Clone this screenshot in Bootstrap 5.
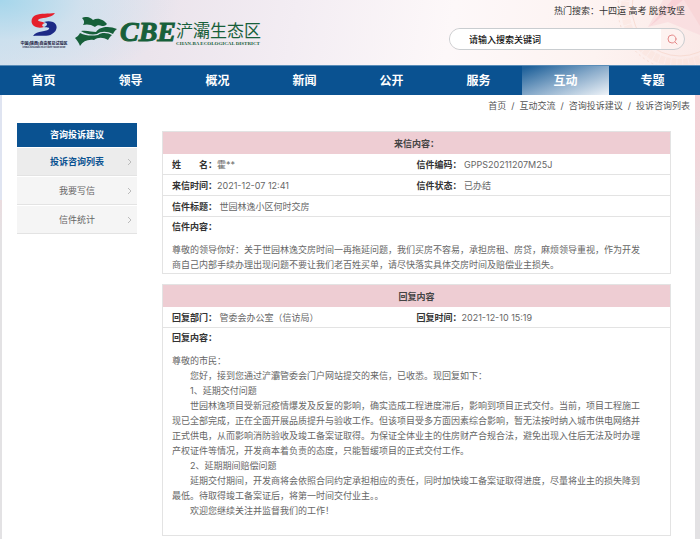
<!DOCTYPE html>
<html lang="zh-CN">
<head>
<meta charset="utf-8">
<meta name="viewport" content="width=device-width, initial-scale=1">
<title>投诉咨询列表 - 浐灞生态区</title>
<link rel="stylesheet" href="https://cdn.jsdelivr.net/npm/bootstrap@5.3.0/dist/css/bootstrap.min.css">
<style>
:root { --brand: #0a5291; --rule: #e3e3e3; }
body {
  font-family: Inter, "Noto Sans CJK SC", sans-serif;
  font-size: 9px; line-height: 15px; color: #666;
  background: #e3e2e4;
}
a { color: inherit; text-decoration: none; }
.backdrop {
  background:
    linear-gradient(90deg, #dfe4f1 0, #dfe4f1 3px, transparent 3px) 0 0 / 100% 200px no-repeat,
    linear-gradient(#f6cdd2, #f3d3d8 150px, #e3e2e4 240px);
}
.site-head {
  height: 65px;
  background:
    radial-gradient(ellipse 180px 90px at 0 0, #a5d6eb, rgba(190,222,238,.5) 45%, transparent),
    linear-gradient(100deg, #d9e2ee 0, #ebe4ec 22%, #f3edf3 42%, #fdf8f9 64%, #fdf3f1 85%, #fbe9e7 100%);
}
.emblem { width: 180px; height: 65px; top: 0; right: 0; z-index: 0; }
.site-head > .head-row { z-index: 1; }
.brand { padding: 13px 0 0 22px; }
.ftz { width: 44px; color: #16163a; }
.ftz-cn { font-size: 4px; line-height: 5px; font-weight: 700; }
.ftz-en { font-size: 2px; line-height: 3px; font-weight: 700; }
.brand-green { color: #17603a; }
.cbe { font: italic 700 28px/30px "Liberation Serif", serif; -webkit-text-stroke: 1px #17603a; }
.cbe-cn { font-size: 17px; line-height: 20px; }
.cbe-en { font: 700 5px/6px "Liberation Serif", serif; }
.head-tools { width: 236px; margin-right: 15px; padding-top: 3px; color: #333; }
.search-pill { height: 22px; margin-top: 10px; border: 1px solid #c9cdd0; overflow: hidden; background: #fdf2f0; }
.search-pill input { font-size: 9px; line-height: 15px; font-weight: 500; padding-left: 19px; min-width: 0; color: #222; outline: 0; }
.search-pill input::placeholder { color: #111; opacity: 1; }
.search-pill button { width: 23px; color: #e58b8b; }
.main-nav { background: var(--brand); border-top: 1px solid #5a8db8; padding-right: 4px; }
.main-nav a { flex: 1 1 0; color: #fff; font-size: 12px; font-weight: 700; line-height: 29px; text-align: center; }
.main-nav a.active { background: linear-gradient(160deg, #1f619a 5%, #86a9c9 50%, #eef3f8 100%); }
.sheet { background: #fff; margin: 0 5px 0 2px; padding-bottom: 16px; }
.crumbs { padding: 3px 5px 0 0; line-height: 15px; color: #555; }
.crumbs .breadcrumb-item { padding: 0; }
.crumbs .breadcrumb-item + .breadcrumb-item::before { color: #555; padding: 0 5px; }
.cols { padding: 10px 24px 0 15px; gap: 25px; }
.side { width: 120px; flex: none; }
.side h2 { background: var(--brand); color: #fff; font-size: 9px; font-weight: 700; line-height: 24px; margin: 0 0 1px; }
.side a { background: #f5f5f5; border-bottom: 1px solid var(--rule); line-height: 27px; margin-top: 1px; position: relative; }
.side a.active { background: #ececec; color: var(--brand); font-weight: 700; }
.side svg { position: absolute; right: 5px; top: 10px; }
.letters { padding-top: 8px; min-width: 0; }
.letter { width: 100%; table-layout: fixed; border: 1px solid var(--rule); margin-bottom: 10px; }
.letter th, .letter td { border: 0 solid var(--rule); border-bottom-width: 1px; padding: 3px 9px 2px; font-weight: 400; }
.letter td + td { padding-left: 0; }
.letter .caption-cell { background: #eecdd3; color: #444; font-weight: 700; text-align: center; padding: 4px 0 3px; border-bottom: 0; }
.letter b { color: #333; font-weight: 700; }
.letter .prose { padding: 2px 25px 1px 9px; border-bottom: 0; }
.prose p { margin: 0; }
.prose b + p { margin-top: 8px; }
.prose .indent { text-indent: 2em; }
.letter.reply .prose { padding-bottom: 17px; }
</style>
<script src="https://cdn.jsdelivr.net/npm/bootstrap@5.3.0/dist/js/bootstrap.bundle.min.js"></script>
</head>
<body>
<div class="backdrop">
<header class="site-head position-relative overflow-hidden">
  <svg class="emblem position-absolute" viewBox="0 0 180 65" aria-hidden="true">
    <g fill="none" stroke="#f8d9cf" stroke-width="1" opacity=".8">
      <circle cx="160" cy="8" r="62" stroke-dasharray="2 3"/>
      <circle cx="160" cy="8" r="48"/>
      <circle cx="160" cy="8" r="55" stroke-width="8" stroke-dasharray="5 1" opacity=".35"/>
    </g>
    <path d="M143 0 L128 27 L148 22 L180 35 V0Z" fill="#f9dcdf" opacity=".8"/>
    <path d="M152 0 L130 26 L163 0Z" fill="#f6cbd2" opacity=".7"/>
    <path d="M164 0 L180 26 V0Z" fill="#f8d3d6" opacity=".8"/>
  </svg>
  <div class="head-row position-relative d-flex justify-content-between">
    <a href="#" class="brand d-flex align-items-start">
      <span class="ftz d-flex flex-column align-items-center text-nowrap">
        <svg width="26" height="24" viewBox="0 0 26 24" aria-hidden="true">
          <path d="M24 0 C17 1 10 0 5 2 C0 4 -1 10 3 13 C6 15 10 15 13 14 C10 13 11 11 14 10 C11 8 7 9 7 7 C9 4 20 6 24 0Z" fill="#e5202c"/>
          <path d="M2 23 C9 22 17 24 21 21 C27 18 27 11 22 9 C19 8 16 8 13 9 C17 10 17 12 13 14 C16 15 19 14 18 16 C16 19 6 17 2 23Z" fill="#1c2a86"/>
        </svg>
        <span class="ftz-cn mt-1">中国(陕西)自由贸易试验区</span>
        <span class="ftz-en">CHINA (SHAANXI) PILOT FREE TRADE ZONE</span>
      </span>
      <svg class="ms-2 mt-1" width="46" height="30" viewBox="0 0 46 30" fill="#17603a" aria-hidden="true">
        <path d="M8 1 C12 -1 16 0 19 3 C24 0 30 3 33 7 C31 9 30 9 28 9 C25 8 23 8 21 10 C17 7 12 7 9 8 C11 5 10 3 8 1Z"/>
        <path d="M7 14 C13 13 18 15 22 15 C26 9 36 9 43 12 C41 13 40 15 39 17 C33 14 27 14 23 17 C18 18 11 17 7 14Z"/>
        <path d="M6 16 C12 19 18 19 24 18 C28 15 34 16 38 18 C36 20 35 21 34 23 C29 20 24 20 20 23 C14 22 9 24 6 29 C5 26 3 23 1 21 C3 20 5 18 6 16Z"/>
      </svg>
      <span class="brand-green d-flex align-items-start">
        <span class="cbe mt-1">CBE</span>
        <span class="d-flex flex-column text-nowrap mt-2"><span class="cbe-cn">浐灞生态区</span><span class="cbe-en">CHAN-BA ECOLOGICAL DISTRICT</span></span>
      </span>
    </a>
    <div class="head-tools">
      <div class="text-end">热门搜索：<a href="#">十四运</a> <a href="#">高考</a> <a href="#">脱贫攻坚</a></div>
      <form class="search-pill rounded-pill d-flex" role="search">
        <input type="text" class="border-0 flex-grow-1 bg-white" placeholder="请输入搜索关键词" aria-label="请输入搜索关键词">
        <button type="button" class="border-0 bg-transparent p-0 d-flex align-items-center justify-content-center" aria-label="搜索">
          <svg width="11" height="11" viewBox="0 0 11 11" fill="none" stroke="currentColor" stroke-linecap="round"><circle cx="5" cy="5" r="4"/><path d="M8 8l2 2"/></svg>
        </button>
      </form>
    </div>
  </div>
</header>
<nav class="main-nav d-flex" aria-label="主导航">
  <a href="#">首页</a><a href="#">领导</a><a href="#">概况</a><a href="#">新闻</a><a href="#">公开</a><a href="#">服务</a><a href="#" class="active" aria-current="page">互动</a><a href="#">专题</a>
</nav>
<main class="sheet">
  <nav aria-label="当前位置">
    <ol class="breadcrumb crumbs justify-content-end mb-0">
      <li class="breadcrumb-item"><a href="#">首页</a></li>
      <li class="breadcrumb-item"><a href="#">互动交流</a></li>
      <li class="breadcrumb-item"><a href="#">咨询投诉建议</a></li>
      <li class="breadcrumb-item"><a href="#">投诉咨询列表</a></li>
    </ol>
  </nav>
  <div class="cols d-flex align-items-start">
    <nav class="side text-center" aria-label="咨询投诉建议">
      <h2>咨询投诉建议</h2>
      <a href="#" class="d-block active">投诉咨询列表<svg width="5" height="8" viewBox="0 0 5 8" fill="none" stroke="#bbb"><path d="M1 1l3 3-3 3"/></svg></a>
      <a href="#" class="d-block">我要写信<svg width="5" height="8" viewBox="0 0 5 8" fill="none" stroke="#bbb"><path d="M1 1l3 3-3 3"/></svg></a>
      <a href="#" class="d-block">信件统计<svg width="5" height="8" viewBox="0 0 5 8" fill="none" stroke="#bbb"><path d="M1 1l3 3-3 3"/></svg></a>
    </nav>
    <div class="letters flex-grow-1">
      <table class="letter">
        <thead><tr><th colspan="2" class="caption-cell" scope="colgroup">来信内容：</th></tr></thead>
        <tbody>
          <tr><td><b>姓　　名：</b>霍**</td><td><b>信件编码：</b> GPPS20211207M25J</td></tr>
          <tr><td><b>来信时间：</b>2021-12-07 12:41</td><td><b>信件状态：</b> 已办结</td></tr>
          <tr><td colspan="2"><b>信件标题：</b> 世园林逸小区何时交房</td></tr>
          <tr><td colspan="2" class="prose"><b>信件内容：</b>
            <p>尊敬的领导你好：关于世园林逸交房时间一再拖延问题，我们买房不容易，承担房租、房贷，麻烦领导重视，作为开发商自己内部手续办理出现问题不要让我们老百姓买单，请尽快落实具体交房时间及赔偿业主损失。</p></td></tr>
        </tbody>
      </table>
      <table class="letter reply mb-0">
        <thead><tr><th colspan="2" class="caption-cell" scope="colgroup">回复内容</th></tr></thead>
        <tbody>
          <tr><td><b>回复部门：</b> 管委会办公室（信访局）</td><td><b>回复时间：</b>2021-12-10 15:19</td></tr>
          <tr><td colspan="2" class="prose"><b>回复内容：</b>
            <p>尊敬的市民：</p>
            <p class="indent">您好，接到您通过浐灞管委会门户网站提交的来信，已收悉。现回复如下：</p>
            <p class="indent">1、延期交付问题</p>
            <p class="indent">世园林逸项目受新冠疫情爆发及反复的影响，确实造成工程进度滞后，影响到项目正式交付。当前，项目工程施工现已全部完成，正在全面开展品质提升与验收工作。但该项目受多方面因素综合影响，暂无法按时纳入城市供电网络并正式供电，从而影响消防验收及竣工备案证取得。为保证全体业主的住房财产合规合法，避免出现入住后无法及时办理产权证件等情况，开发商本着负责的态度，只能暂缓项目的正式交付工作。</p>
            <p class="indent">2、延期期间赔偿问题</p>
            <p class="indent">延期交付期间，开发商将会依照合同约定承担相应的责任，同时加快竣工备案证取得进度，尽量将业主的损失降到最低。待取得竣工备案证后，将第一时间交付业主。。</p>
            <p class="indent">欢迎您继续关注并监督我们的工作！</p></td></tr>
        </tbody>
      </table>
    </div>
  </div>
</main>
</div>
</body>
</html>
